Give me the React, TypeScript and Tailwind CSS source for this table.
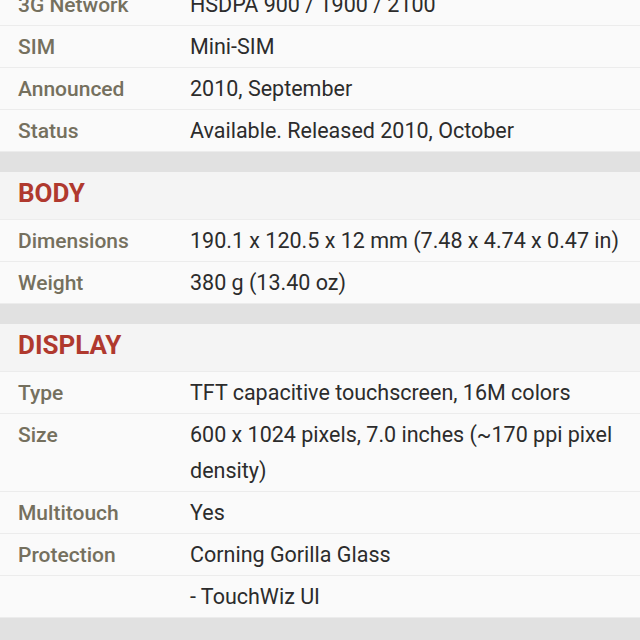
const sections: { title?: string; rows: [string, string][] }[] = [
  {
    rows: [
      ["3G Network", "HSDPA 900 / 1900 / 2100"],
      ["SIM", "Mini-SIM"],
      ["Announced", "2010, September"],
      ["Status", "Available. Released 2010, October"],
    ],
  },
  {
    title: "BODY",
    rows: [
      ["Dimensions", "190.1 x 120.5 x 12 mm (7.48 x 4.74 x 0.47 in)"],
      ["Weight", "380 g (13.40 oz)"],
    ],
  },
  {
    title: "DISPLAY",
    rows: [
      ["Type", "TFT capacitive touchscreen, 16M colors"],
      ["Size", "600 x 1024 pixels, 7.0 inches (~170 ppi pixel density)"],
      ["Multitouch", "Yes"],
      ["Protection", "Corning Gorilla Glass"],
      ["", "- TouchWiz UI"],
    ],
  },
];

function SpecRow({ label, value }: { label: string; value: string }) {
  return (
    <div className="flex border-b border-[#ececec] bg-[#fafafa] py-[2.5px] leading-[36px]">
      <div className="w-[190px] shrink-0 pl-[18px] text-[21px] font-medium text-[#75705e]">{label}</div>
      <div className="flex-1 pr-[12px] text-[21.5px] text-[#2c2c2c]">{value}</div>
    </div>
  );
}

export default function App() {
  return (
    <div
      className="h-[640px] w-[640px] overflow-hidden bg-[#e1e1e1]"
      style={{ fontFamily: "Roboto, 'Noto Sans', sans-serif" }}
    >
      <div className="-mt-[16px]">
        {sections.map((s, i) => (
          <div key={i} className="mb-[20px]">
            {s.title && (
              <div className="flex h-[48px] items-center border-b border-[#ececec] bg-[#f4f4f4] pb-[4px] pl-[18px] text-[26px] font-bold text-[#b0392e]">
                {s.title}
              </div>
            )}
            {s.rows.map(([l, v], j) => (
              <SpecRow key={j} label={l} value={v} />
            ))}
          </div>
        ))}
      </div>
    </div>
  );
}
